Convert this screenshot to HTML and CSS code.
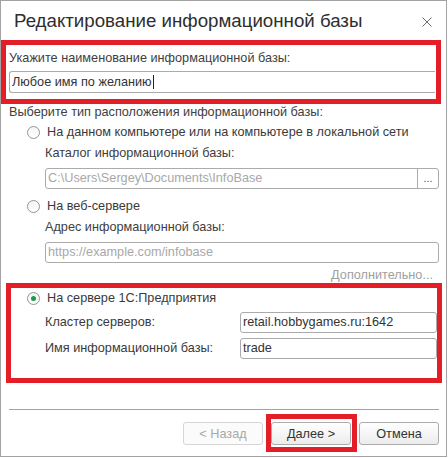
FILE: index.html
```html
<!DOCTYPE html>
<html lang="ru">
<head>
<meta charset="utf-8">
<title>Редактирование информационной базы</title>
<link rel="stylesheet" href="styles.css">
</head>
<body>
<div class="window">
  <div class="titlebar">
    <span class="title">Редактирование информационной базы</span>
    <svg class="close" width="10" height="10" viewBox="0 0 10 10"><path d="M0.5 0.5L9.5 9.5M9.5 0.5L0.5 9.5" stroke="#6b6b6b" stroke-width="1" fill="none"/></svg>
  </div>

  <section class="hl hl-name">
    <div class="label">Укажите наименование информационной базы:</div>
    <div class="input input-name"><span class="value">Любое имя по желанию</span><span class="caret"></span></div>
  </section>

  <div class="label lbl-type">Выберите тип расположения информационной базы:</div>

  <div class="radio-row"><span class="radio"></span><span>На данном компьютере или на компьютере в локальной сети</span></div>
  <div class="sub">
    <div class="label sub-label">Каталог информационной базы:</div>
    <div class="input sub-input with-btn"><span class="ph">C:\Users\Sergey\Documents\InfoBase</span><span class="dots">...</span></div>
  </div>

  <div class="radio-row rr-web"><span class="radio"></span><span>На веб-сервере</span></div>
  <div class="sub">
    <div class="label sub-label">Адрес информационной базы:</div>
    <div class="input sub-input"><span class="ph">https://example.com/infobase</span></div>
  </div>

  <div class="more">Дополнительно...</div>

  <section class="hl hl-server">
    <div class="radio-row rr-server"><span class="radio checked"></span><span>На сервере 1С:Предприятия</span></div>
    <div class="field-row fr-first">
      <span class="label">Кластер серверов:</span>
      <div class="input"><span class="value">retail.hobbygames.ru:1642</span></div>
    </div>
    <div class="field-row">
      <span class="label">Имя информационной базы:</span>
      <div class="input"><span class="value">trade</span></div>
    </div>
  </section>

  <div class="separator"></div>

  <div class="buttons">
    <button class="btn" disabled>&lt; Назад</button>
    <button class="btn btn-next">Далее &gt;</button>
    <button class="btn">Отмена</button>
  </div>
</div>
</body>
</html>
```

FILE: styles.css
```css
* { box-sizing: border-box; }
html, body { margin: 0; padding: 0; background: #ffffff; }
body {
  font-family: "Liberation Sans", Arial, sans-serif;
  font-size: 12.7px;
  color: #404040;
}
.window {
  width: 447px;
  height: 457px;
  border: 1px solid #a3a3a3;
  display: flex;
  flex-direction: column;
}
.titlebar {
  height: 39px;
  flex: none;
  display: flex;
  align-items: flex-start;
  justify-content: space-between;
  padding: 10px 0 0 13px;
}
.title {
  font-size: 18.7px;
  line-height: 20px;
  color: #2e2e2e;
}
.close {
  margin: 6px 14px 0 0;
}
.label { line-height: 15px; white-space: nowrap; }

.hl { border: 5px solid #e31e27; flex: none; }
.hl-name {
  width: 440px;
  height: 64px;
  padding: 6px 0 0 3px;
}
.input {
  height: 21px;
  border: 1px solid #ababab;
  border-radius: 3px;
  background: #fff;
  display: flex;
  align-items: center;
  padding: 0 2px;
  line-height: 15px;
  white-space: nowrap;
  overflow: hidden;
}
.value { color: #333333; }
.ph { color: #a8a8a8; }
.input-name {
  margin-top: 5px;
  height: 22px;
  width: 426px;
  border-right: none;
  border-radius: 3px 0 0 3px;
}
.caret {
  width: 1px;
  height: 14px;
  background: #222;
  margin-left: 1px;
}
.lbl-type { margin: 1px 0 0 8px; }

.radio-row {
  display: flex;
  align-items: center;
  gap: 7px;
  margin-top: 5px;
  padding-left: 26px;
  line-height: 15px;
  color: #3a3a3a;
}
.radio {
  width: 13px;
  height: 13px;
  border-radius: 50%;
  border: 1px solid #959595;
  background: linear-gradient(#f4f4f4, #ffffff);
  flex: none;
  display: flex;
  align-items: center;
  justify-content: center;
}
.radio.checked::after {
  content: "";
  width: 5px;
  height: 5px;
  border-radius: 50%;
  background: #1f9a48;
}
.sub { padding-left: 44px; }
.sub-label { margin-top: 6px; }
.sub-input { margin-top: 7px; width: 394px; }
.with-btn { padding-right: 0; justify-content: space-between; }
.dots {
  width: 21px;
  height: 100%;
  border-left: 1px solid #ababab;
  color: #555;
  font-size: 11px;
  text-align: center;
  line-height: 19px;
  flex: none;
}
.rr-web { margin-top: 10px; }
.more {
  margin-top: 5px;
  line-height: 15px;
  text-align: right;
  padding-right: 13px;
  color: #a0a0a0;
}
.hl-server {
  margin-left: 5px;
  width: 436px;
  height: 100px;
  padding: 3px 0 0 0;
}
.rr-server { margin-top: 0; padding-left: 16px; }
.field-row {
  display: grid;
  grid-template-columns: 195px 197px;
  align-items: center;
  padding-left: 34px;
  margin-top: 5px;
}
.fr-first { margin-top: 6px; }
.field-row .label { color: #3a3a3a; }

.separator {
  height: 1px;
  background: #a3a3a3;
  margin: 26px 7px 0 8px;
  flex: none;
}
.buttons {
  display: flex;
  justify-content: flex-end;
  gap: 8px;
  margin-top: 12px;
  padding-right: 7px;
}
.btn {
  width: 80px;
  height: 23px;
  border: 1px solid #acacac;
  border-radius: 3px;
  background: linear-gradient(#ffffff, #ececec);
  font-family: "Liberation Sans", Arial, sans-serif;
  font-size: 12.7px;
  color: #333333;
  padding: 0;
}
.btn:disabled {
  border-color: #d6d6d6;
  background: #fbfbfb;
  color: #a8a8a8;
}
.btn-next { position: relative; }
.btn-next::after {
  content: "";
  position: absolute;
  left: -6px;
  right: -7px;
  top: -9px;
  bottom: -8px;
  border: 5px solid #e31e27;
}
```
